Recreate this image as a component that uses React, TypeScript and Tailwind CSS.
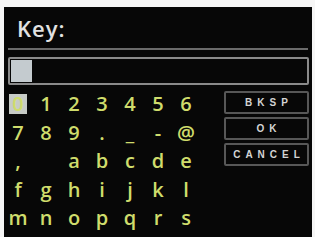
const ROWS = [
  ['0', '1', '2', '3', '4', '5', '6'],
  ['7', '8', '9', '.', '_', '-', '@'],
  [',', '', 'a', 'b', 'c', 'd', 'e'],
  ['f', 'g', 'h', 'i', 'j', 'k', 'l'],
  ['m', 'n', 'o', 'p', 'q', 'r', 's'],
]

const BUTTONS = ['BKSP', 'OK', 'CANCEL']

export default function App() {
  return (
    <div className="h-[237px] w-[315px] overflow-hidden bg-[#f6f6f6] pl-[4px] pt-[7px]">
      <div className="h-[230px] w-[308px] bg-[#070707]">
        <div className="h-[41px] pl-[13px] pt-[8px] font-['Open_Sans',sans-serif] text-[22px] font-semibold leading-[26px] tracking-[1px] text-[#e2e2e2]">
          Key:
        </div>
        <div className="ml-[4px] h-[2px] w-[300px] bg-[#6a6a6a]" />

        <div className="ml-[4px] mt-[7px] flex h-[28px] w-[301px] items-center rounded-[2px] border-2 border-[#8a8a8a] pl-[1px]">
          <div className="h-[22px] w-[21px] bg-[#c4cbcf]" />
        </div>

        <div className="mt-[5px] flex">
          <div className="w-[196px] font-['Open_Sans',sans-serif] text-[20px] font-semibold leading-[20px] text-[#cfdc6c]">
            {ROWS.map((row, r) => (
              <div key={r} className="flex h-[28.5px]">
                {row.map((k, c) => (
                  <div key={c} className="flex w-[28px] items-center justify-center">
                    {r === 0 && c === 0 ? (
                      <span className="flex h-[20px] w-[18px] items-center justify-center bg-[#c7cbc6]">
                        {k}
                      </span>
                    ) : (
                      k
                    )}
                  </div>
                ))}
              </div>
            ))}
          </div>

          <div className="ml-[24px] mt-[1px] flex w-[85px] flex-col gap-[3px]">
            {BUTTONS.map((b) => (
              <div
                key={b}
                className="flex h-[23px] items-center justify-center rounded-[2px] border-2 border-[#575757] pl-[5px] font-['Liberation_Sans',sans-serif] text-[10px] font-bold tracking-[5px] text-[#d4d4d4]"
              >
                {b}
              </div>
            ))}
          </div>
        </div>
      </div>
    </div>
  )
}
